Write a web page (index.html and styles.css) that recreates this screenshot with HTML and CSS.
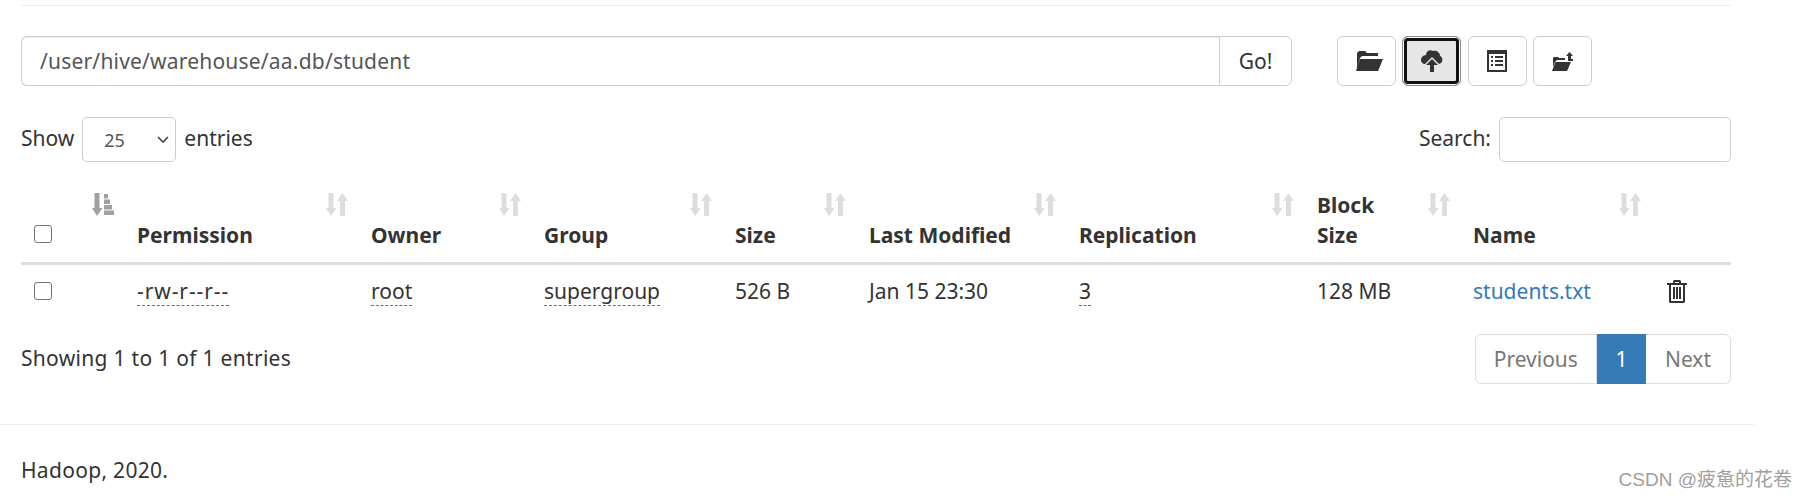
FILE: index.html
```html
<!DOCTYPE html>
<html lang="en">
  <head>
    <meta charset="UTF-8" />
    <title>Browse Directory</title>
    <link rel="stylesheet" href="styles.css">
  </head>
  <body>
    <div class="container">
      <hr class="top-rule" />

      <div class="toolbar">
        <div class="path-group">
          <input class="path-input" type="text" value="/user/hive/warehouse/aa.db/student" />
          <button class="btn go-btn">Go!</button>
        </div>
        <div class="tool-buttons">
          <button class="btn icon-btn">
            <svg class="folder-icon" width="27" height="20" viewBox="0 0 27 20"><path fill="#333" d="M1 17 L1 2 L3 0 L9 0 L11 2 L22 2 L22 5 L6 5 L4 7 Z M0 20 L4 8 L27 8 L22 20 Z"/></svg>
          </button>
          <button class="btn icon-btn active">
            <svg width="22" height="24" viewBox="0 0 22 24"><path fill="#333" d="M11 8 L18 15 L20 14 C22 12 22 8 19 7 C19 3 15 1 12 2 C9 0 5 2 5 6 C2 6 0 9 0 11 C0 13 1 14 3 15 L4 15 Z"/><path fill="#333" d="M11 10 L17 16 L13 16 L13 23 L9 23 L9 16 L5 16 Z"/></svg>
          </button>
          <button class="btn icon-btn">
            <svg width="20" height="22" viewBox="0 0 20 22"><path fill="#333" fill-rule="evenodd" d="M0 0 H20 V22 H0 Z M2 4 V20 H18 V4 Z"/><path fill="#333" d="M4 6 H6 V8 H4 Z M8 6 H16 V8 H8 Z M4 10 H6 V12 H4 Z M8 10 H16 V12 H8 Z M4 14 H6 V16 H4 Z M8 14 H16 V16 H8 Z"/></svg>
          </button>
          <button class="btn icon-btn">
            <svg width="21" height="19" viewBox="0 0 21 19"><path fill="#333" d="M1 15 L1 6 L2 5 L6 5 L7 6 L13 6 L13 8 L5 8 L3 10 Z M0 19 L3.5 10 L19 10 L15 19 Z"/><path fill="#333" d="M17.5 0 L21 4 L19 4 L19 7 L21 7 L21 9 L16 9 L16 4 L14 4 Z"/></svg>
          </button>
        </div>
      </div>

      <div class="controls">
        <label class="length-label">Show
          <span class="select-box">25
            <svg width="12" height="8" viewBox="0 0 12 8"><path d="M1 1 L6 6 L11 1" fill="none" stroke="#444" stroke-width="1.6"/></svg>
          </span>
          entries</label>
        <label class="search-label">Search: <input class="search-input" type="text" /></label>
      </div>

      <table class="file-table">
        <colgroup>
          <col class="col-check" />
          <col class="col-perm" />
          <col class="col-owner" />
          <col class="col-group" />
          <col class="col-size" />
          <col class="col-date" />
          <col class="col-repl" />
          <col class="col-block" />
          <col class="col-name" />
          <col class="col-del" />
        </colgroup>
        <thead>
          <tr>
            <th class="check-cell"><span class="check head-check"></span>
              <svg class="sort-icon sorted" width="22" height="23" viewBox="0 0 22 23"><path d="M2.5 0 H7.5 V15 H10.5 L5 23 L0 15 H2.5 Z M12 1 H16 V5.5 H12 Z M12 6.5 H18 V11 H12 Z M12 12 H20 V16.5 H12 Z M12 17.5 H22 V22 H12 Z"/></svg>
            </th>
            <th>Permission<svg class="sort-icon" width="22" height="23" viewBox="0 0 22 23"><path d="M2.5 0 H7.5 V15 H10.5 L5 23 L0 15 H2.5 Z M14 23 H19 V8 H22 L16.5 0 L11 8 H14 Z"/></svg></th>
            <th>Owner<svg class="sort-icon" width="22" height="23" viewBox="0 0 22 23"><path d="M2.5 0 H7.5 V15 H10.5 L5 23 L0 15 H2.5 Z M14 23 H19 V8 H22 L16.5 0 L11 8 H14 Z"/></svg></th>
            <th>Group<svg class="sort-icon" width="22" height="23" viewBox="0 0 22 23"><path d="M2.5 0 H7.5 V15 H10.5 L5 23 L0 15 H2.5 Z M14 23 H19 V8 H22 L16.5 0 L11 8 H14 Z"/></svg></th>
            <th>Size<svg class="sort-icon" width="22" height="23" viewBox="0 0 22 23"><path d="M2.5 0 H7.5 V15 H10.5 L5 23 L0 15 H2.5 Z M14 23 H19 V8 H22 L16.5 0 L11 8 H14 Z"/></svg></th>
            <th>Last Modified<svg class="sort-icon" width="22" height="23" viewBox="0 0 22 23"><path d="M2.5 0 H7.5 V15 H10.5 L5 23 L0 15 H2.5 Z M14 23 H19 V8 H22 L16.5 0 L11 8 H14 Z"/></svg></th>
            <th>Replication<svg class="sort-icon" width="22" height="23" viewBox="0 0 22 23"><path d="M2.5 0 H7.5 V15 H10.5 L5 23 L0 15 H2.5 Z M14 23 H19 V8 H22 L16.5 0 L11 8 H14 Z"/></svg></th>
            <th>Block<br />Size<svg class="sort-icon" width="22" height="23" viewBox="0 0 22 23"><path d="M2.5 0 H7.5 V15 H10.5 L5 23 L0 15 H2.5 Z M14 23 H19 V8 H22 L16.5 0 L11 8 H14 Z"/></svg></th>
            <th>Name<svg class="sort-icon" width="22" height="23" viewBox="0 0 22 23"><path d="M2.5 0 H7.5 V15 H10.5 L5 23 L0 15 H2.5 Z M14 23 H19 V8 H22 L16.5 0 L11 8 H14 Z"/></svg></th>
            <th></th>
          </tr>
        </thead>
        <tbody>
          <tr>
            <td class="check-cell"><span class="check"></span></td>
            <td><span class="dotted perm">-rw-r--r--</span></td>
            <td><span class="dotted">root</span></td>
            <td><span class="dotted">supergroup</span></td>
            <td>526 B</td>
            <td>Jan 15 23:30</td>
            <td><span class="dotted">3</span></td>
            <td>128 MB</td>
            <td><a class="file-link" href="#">students.txt</a></td>
            <td>
              <svg class="trash" width="20" height="23" viewBox="0 0 20 23"><path fill="#333" fill-rule="evenodd" d="M6 3 V1 L7 0 H13 L14 1 V3 H20 V5 H18 V22 L17 23 H3 L2 22 V5 H0 V3 Z M8 3 H12 V2 H8 Z M4 5 V21 H16 V5 Z"/><path fill="#333" d="M6 7 H8 V19 H6 Z M9 7 H11 V19 H9 Z M12 7 H14 V19 H12 Z"/></svg>
            </td>
          </tr>
        </tbody>
      </table>

      <div class="table-footer">
        <div class="info">Showing 1 to 1 of 1 entries</div>
        <ul class="pagination">
          <li class="page prev">Previous</li>
          <li class="page current">1</li>
          <li class="page next">Next</li>
        </ul>
      </div>
    </div>

    <footer class="page-footer">
      <p>Hadoop, 2020.</p>
    </footer>
    <div class="watermark">CSDN @疲惫的花卷</div>
  </body>
</html>
```

FILE: styles.css
```css
* {
  box-sizing: border-box;
}

body {
  margin: 0;
  font-family: "Noto Sans", "Noto Sans CJK SC", sans-serif;
  font-size: 21px;
  line-height: 30px;
  color: #333;
  background: #fff;
  overflow: hidden;
}

.container {
  width: 1754px;
  padding: 0 23px 0 21px;
}

.top-rule {
  margin: 0;
  padding-top: 5px;
  border: 0;
  border-bottom: 1px solid #eee;
}

.toolbar {
  display: flex;
  margin-top: 30px;
}

.path-group {
  display: flex;
  width: 1271px;
}

.path-input {
  flex: 1;
  height: 50px;
  padding: 0 18px;
  font: inherit;
  letter-spacing: 0.2px;
  color: #555;
  border: 1px solid #ccc;
  border-right: 0;
  border-radius: 6px 0 0 6px;
  box-shadow: inset 0 1px 1px rgba(0, 0, 0, 0.075);
}

.btn {
  display: flex;
  align-items: center;
  justify-content: center;
  height: 50px;
  padding: 0;
  font: inherit;
  color: #333;
  background: #fff;
  border: 1px solid #ccc;
  border-radius: 6px;
}

.go-btn {
  width: 73px;
  border-radius: 0 6px 6px 0;
}

.tool-buttons {
  display: flex;
  gap: 6.3px;
  margin-left: 45px;
}

.icon-btn {
  width: 59px;
}

.folder-icon {
  margin-left: 6px;
}

.icon-btn.active {
  background: #e6e6e6;
  border: 1px solid #8c8c8c;
  box-shadow: inset 0 0 0 1px #fff, inset 0 0 0 4px #111;
}

.controls {
  display: flex;
  justify-content: space-between;
  align-items: center;
  margin-top: 31px;
  height: 45px;
}

.length-label,
.search-label {
  display: flex;
  align-items: center;
  gap: 6px;
  height: 45px;
  padding-bottom: 4px;
}

.length-label {
  gap: 8px;
}

.select-box {
  display: flex;
  align-items: center;
  justify-content: space-between;
  width: 94px;
  height: 45px;
  margin-top: 4px;
  padding: 0 6px 0 21px;
  font-size: 18px;
  color: #555;
  border: 1px solid #ccc;
  border-radius: 5px;
}

.search-input {
  width: 232px;
  height: 45px;
  margin-top: 4px;
  margin-left: 2px;
  border: 1px solid #ccc;
  border-radius: 5px;
}

.file-table {
  width: 1710px;
  margin-top: 29px;
  table-layout: fixed;
  border-collapse: collapse;
}

.col-check { width: 105px; }
.col-perm { width: 234px; }
.col-owner { width: 173px; }
.col-group { width: 191px; }
.col-size { width: 134px; }
.col-date { width: 210px; }
.col-repl { width: 238px; }
.col-block { width: 156px; }
.col-name { width: 191px; }
.col-del { width: 78px; }

th {
  position: relative;
  padding: 0 11px 12px;
  text-align: left;
  vertical-align: bottom;
  font-weight: 700;
  line-height: 29.5px;
  border-bottom: 3px solid #ddd;
}

td {
  padding: 11px;
  height: 54px;
  vertical-align: middle;
}

.check-cell {
  padding-left: 13px;
}

.check {
  display: block;
  width: 18px;
  height: 18px;
  background: #fff;
  border: 1.5px solid #767676;
  border-radius: 3px;
}

.head-check {
  margin-bottom: 7px;
}

.sort-icon {
  position: absolute;
  top: 2px;
  right: 12px;
  fill: #ddd;
}

.sort-icon.sorted {
  fill: #a0a0a0;
}

.dotted {
  border-bottom: 1px dashed #337ab7;
}

.perm {
  letter-spacing: 0.9px;
}

.file-link {
  color: #337ab7;
  text-decoration: none;
}

.trash {
  display: block;
  margin-left: 3px;
}

.table-footer {
  display: flex;
  justify-content: space-between;
  align-items: flex-start;
  margin-top: 16px;
}

.info {
  margin-top: 9px;
  letter-spacing: 0.3px;
}

.pagination {
  display: flex;
  margin: 0;
  padding: 0;
  list-style: none;
}

.page {
  display: flex;
  align-items: center;
  height: 50px;
  padding: 0 17.5px;
  color: #777;
  border: 1px solid #ddd;
}

.page.prev {
  padding: 0 18px;
  border-radius: 6px 0 0 6px;
}

.page.next {
  padding: 0 19px;
  border-left: 0;
  border-radius: 0 6px 6px 0;
}

.page.current {
  color: #fff;
  background: #337ab7;
  border-color: #337ab7;
}

.page-footer {
  width: 1754px;
  margin-top: 40px;
  padding: 0 21px;
  border-top: 1px solid #eee;
}

.page-footer p {
  margin: 30px 0 0;
  letter-spacing: 0.3px;
}

.watermark {
  position: absolute;
  top: 465px;
  right: 16px;
  font-family: "Liberation Sans", "Noto Sans CJK SC", sans-serif;
  font-size: 19px;
  color: #a0a0a0;
}
```
